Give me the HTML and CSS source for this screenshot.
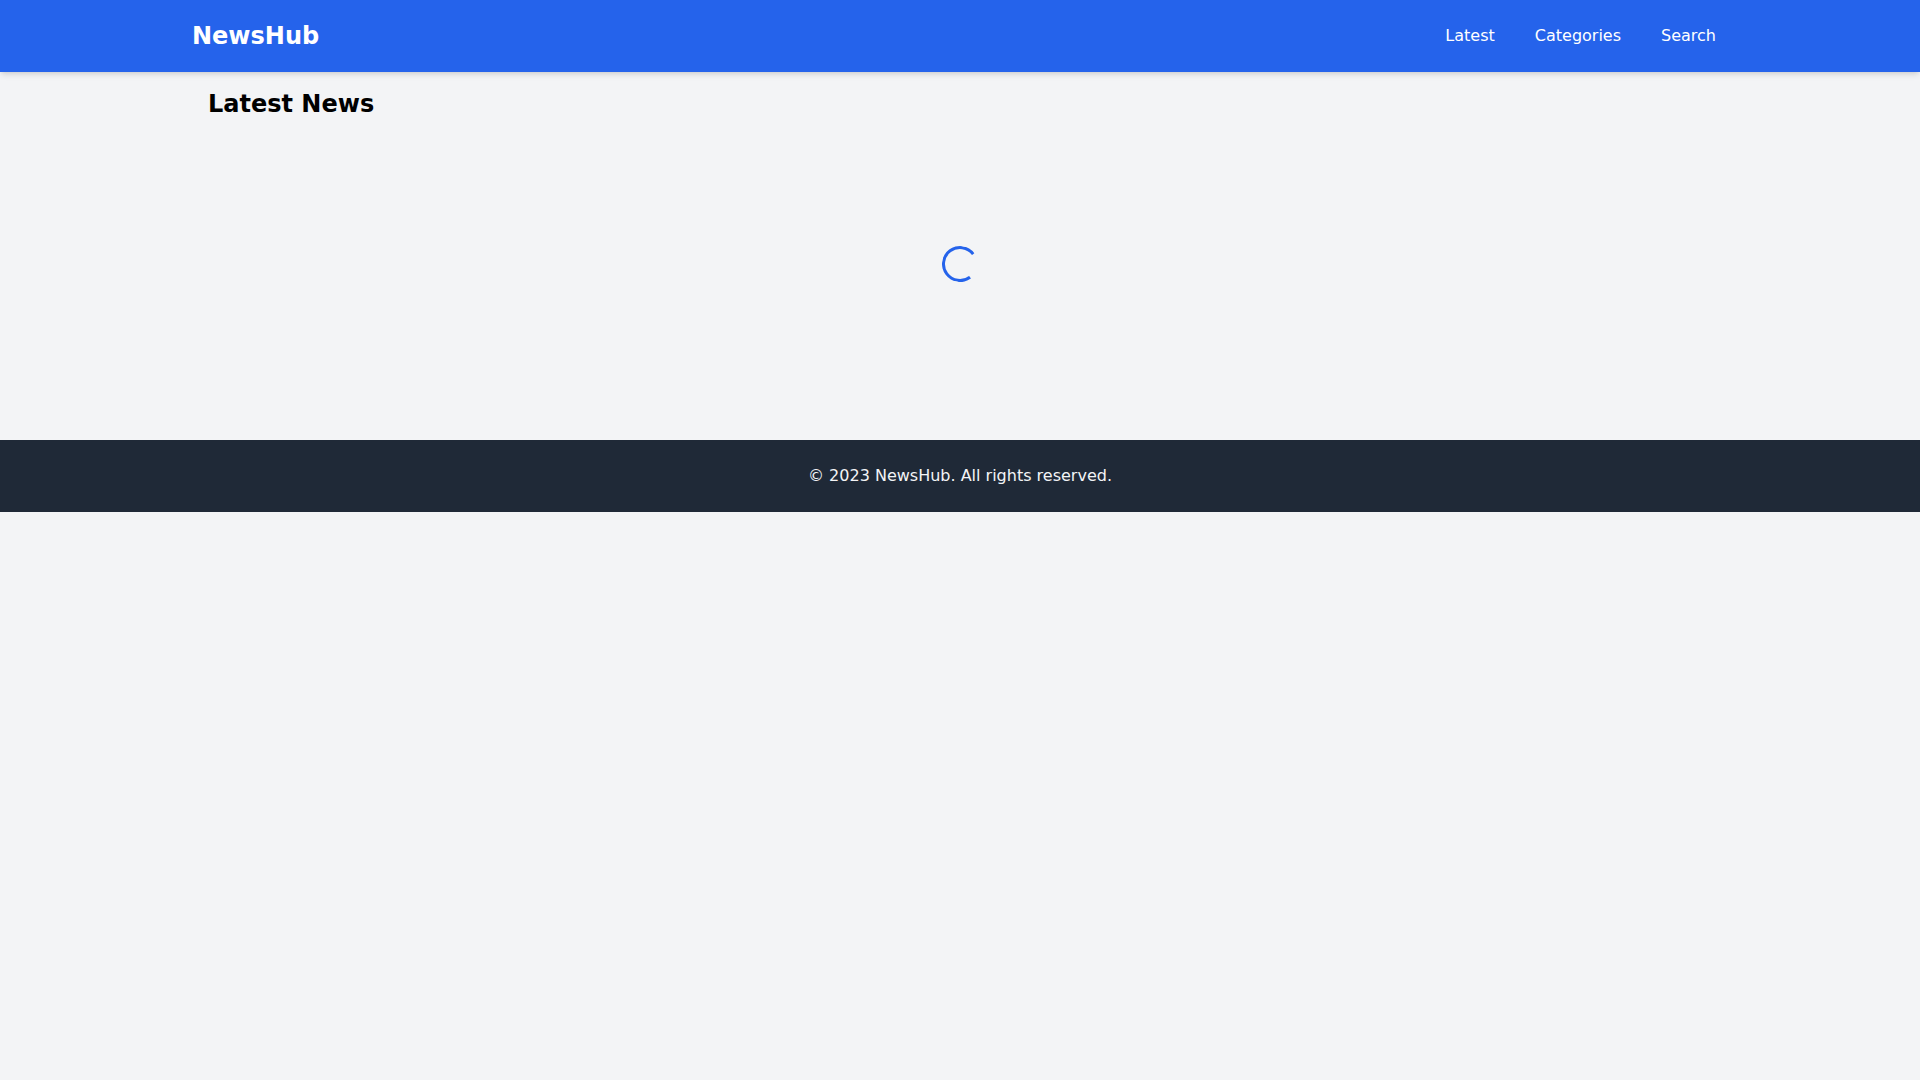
FILE: index.html
```html
<!DOCTYPE html>
<html lang="en">
<head>
    <meta charset="UTF-8">
    <meta name="viewport" content="width=device-width, initial-scale=1.0">
    <title>NewsHub</title>
    <link rel="stylesheet" href="styles.css">
</head>
<body>
    <header class="site-header">
        <div class="container header-inner">
            <a class="logo" href="#">NewsHub</a>
            <nav class="main-nav">
                <a href="#">Latest</a>
                <a href="#">Categories</a>
                <a href="#">Search</a>
            </nav>
        </div>
    </header>

    <main class="container content">
        <h1 class="page-title">Latest News</h1>
        <div class="loading">
            <div class="spinner"></div>
        </div>
    </main>

    <footer class="site-footer">
        <p>&copy; 2023 NewsHub. All rights reserved.</p>
    </footer>
</body>
</html>
```
FILE: styles.css
```css
body {
    margin: 0;
    background-color: #f3f4f6;
    font-family: "DejaVu Sans", sans-serif;
    font-size: 16px;
    line-height: 24px;
    color: #111827;
}
a {
    color: inherit;
    text-decoration: none;
}
.container {
    max-width: 1536px;
    margin: 0 auto;
    box-sizing: border-box;
}
.site-header {
    background-color: #2563eb;
    color: #fff;
    box-shadow: 0 4px 6px -1px rgba(0, 0, 0, 0.1), 0 2px 4px -2px rgba(0, 0, 0, 0.1);
    position: relative;
}
.header-inner {
    display: flex;
    justify-content: space-between;
    align-items: center;
    padding: 16px 0;
}
.logo {
    font-size: 24px;
    line-height: 32px;
    font-weight: bold;
}
.main-nav {
    display: flex;
    gap: 16px;
}
.main-nav a {
    padding: 8px 12px;
    border-radius: 4px;
}
.content {
    padding: 16px;
}
.page-title {
    margin: 0 0 16px;
    font-size: 24px;
    line-height: 32px;
    font-weight: bold;
    color: #000;
}
.loading {
    display: flex;
    justify-content: center;
    align-items: center;
    height: 256px;
}
.spinner {
    width: 36px;
    height: 36px;
    box-sizing: border-box;
    border: 3px solid #2563eb;
    border-right-color: transparent;
    border-radius: 50%;
    transform: rotate(8deg);
}
.site-footer {
    margin-top: 32px;
    background-color: #1f2937;
    color: #f3f4f6;
    text-align: center;
    padding: 24px 0;
}
.site-footer p {
    margin: 0;
}
```
